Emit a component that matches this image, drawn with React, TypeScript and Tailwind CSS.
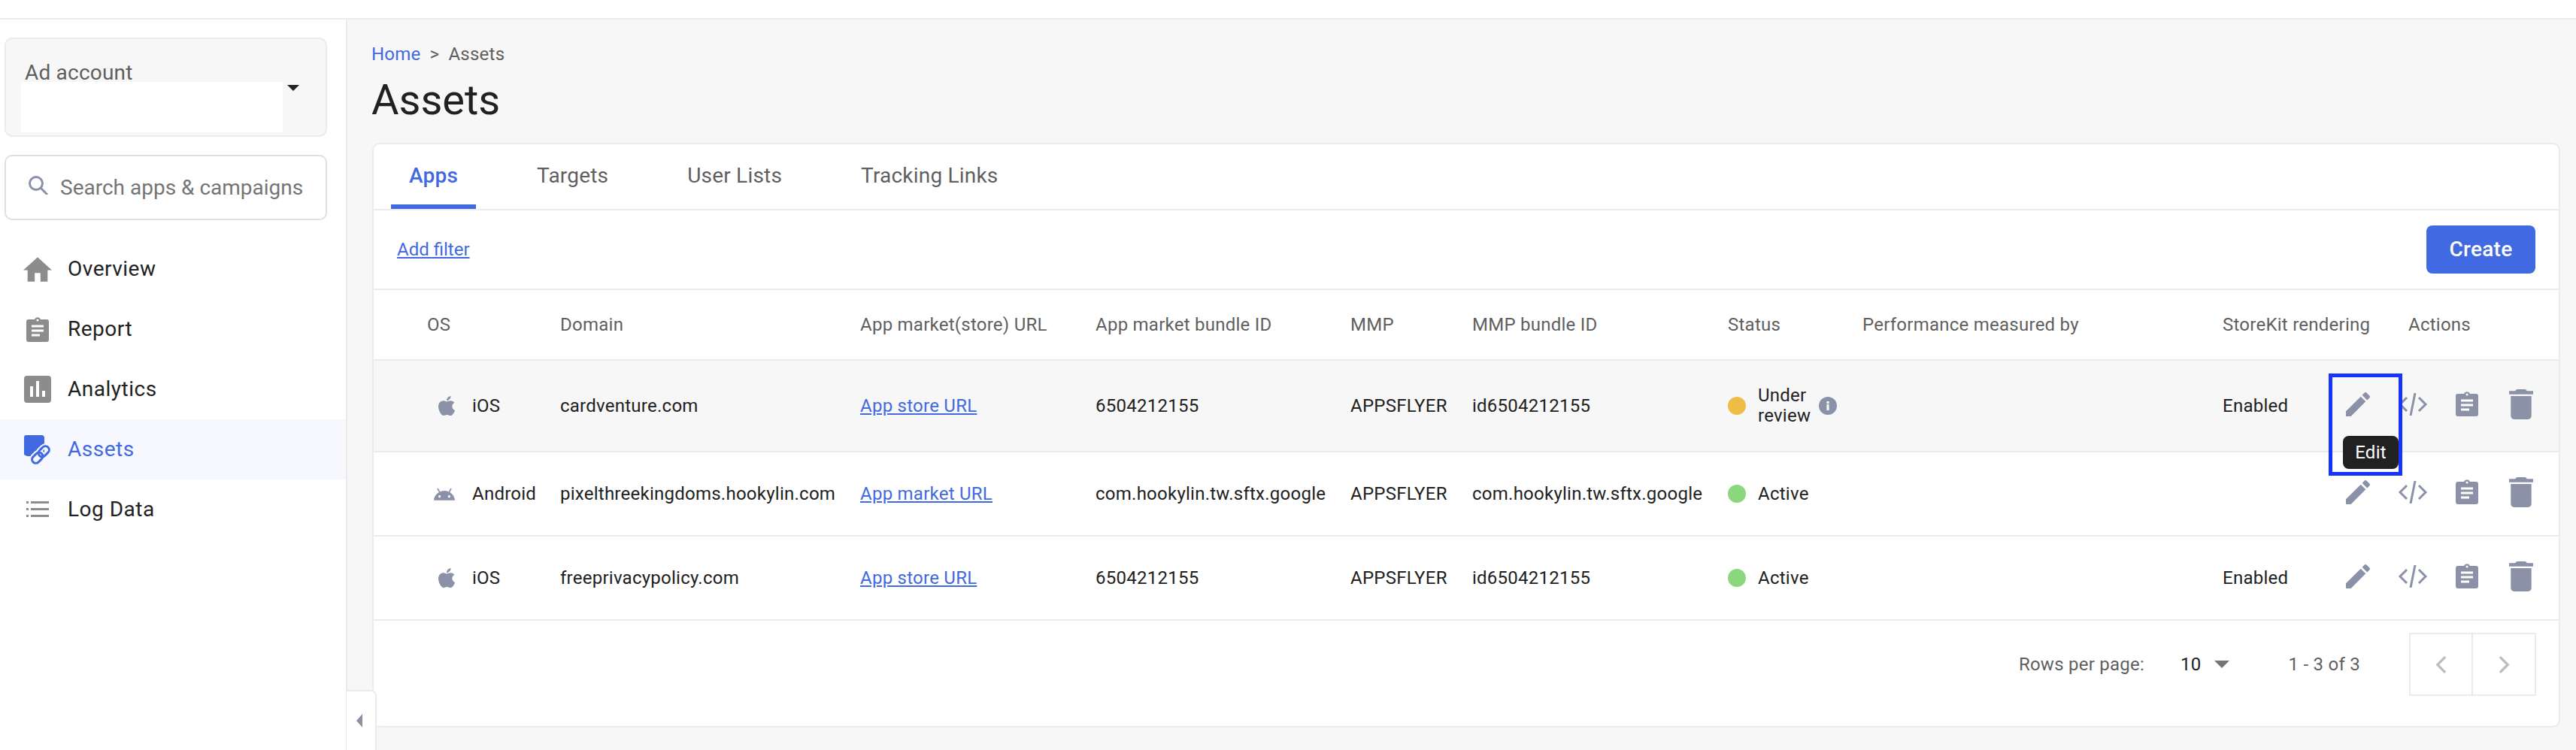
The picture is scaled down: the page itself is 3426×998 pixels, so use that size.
import React from "react";
import { FaApple } from "react-icons/fa";

const Edit = () => (
  <svg viewBox="3 3 18 18" className="w-[32px] h-[32px] fill-[#8b92a8] shrink-0">
    <path d="M3 17.25V21h3.75L17.81 9.94l-3.75-3.75L3 17.25zM20.71 7.04c.39-.39.39-1.02 0-1.41l-2.34-2.34c-.39-.39-1.02-.39-1.41 0l-1.83 1.83 3.75 3.75 1.83-1.83z" />
  </svg>
);
const Code = () => (
  <svg viewBox="0 0 40 30" fill="none" className="w-[40px] h-[30px] stroke-[#8b92a8] shrink-0" strokeWidth="3">
    <path d="M12 6 3 15l9 9M28 6l9 9-9 9M23 0l-6 30" />
  </svg>
);
const Clipboard = ({ fill = "#8b92a8", bg = "white", className = "" }: { fill?: string; bg?: string; className?: string }) => (
  <svg viewBox="0 0 30 33" className={"w-[30px] h-[33px] shrink-0 " + className}>
    <path fill={fill} d="M3 3h8.2a4 4 0 0 1 7.6 0H27a3 3 0 0 1 3 3v24a3 3 0 0 1-3 3H3a3 3 0 0 1-3-3V6a3 3 0 0 1 3-3z" />
    <circle cx="15" cy="4" r="1.5" fill={bg} />
    <rect x="7" y="10.5" width="16" height="3" fill={bg} />
    <rect x="7" y="16.5" width="16" height="3" fill={bg} />
    <rect x="7" y="22.5" width="11" height="3" fill={bg} />
  </svg>
);
const Trash = () => (
  <svg viewBox="5 3 14 18" preserveAspectRatio="none" className="w-[32px] h-[40px] fill-[#8b92a8] shrink-0">
    <path d="M6 19c0 1.1.9 2 2 2h8c1.1 0 2-.9 2-2V7H6v12zM19 4h-3.5l-1-1h-5l-1 1H5v2h14V4z" />
  </svg>
);
const Android = () => (
  <svg viewBox="1 5 22 13" className="w-[28px] h-[19px] fill-[#8b92a8]">
    <path d="M17.6 9.48l1.84-3.18c.16-.31.04-.69-.26-.85-.29-.15-.65-.06-.83.22l-1.88 3.24c-2.86-1.21-6.08-1.21-8.94 0L5.65 5.67c-.19-.29-.58-.38-.87-.2-.28.18-.37.54-.22.83L6.4 9.48C3.3 11.25 1.28 14.44 1 18h22c-.28-3.56-2.3-6.75-5.4-8.52zM7 15.25c-.69 0-1.25-.56-1.25-1.25s.56-1.25 1.25-1.25 1.25.56 1.25 1.25-.56 1.25-1.25 1.25zm10 0c-.69 0-1.25-.56-1.25-1.25s.56-1.25 1.25-1.25 1.25.56 1.25 1.25-.56 1.25-1.25 1.25z" />
  </svg>
);
const Home = () => (
  <svg viewBox="2 3 20 17" className="w-[38px] h-[33px] fill-[#8c8c8c]">
    <path d="M10 20v-6h4v6h5v-8h3L12 3 2 12h3v8z" />
  </svg>
);
const Analytics = () => (
  <svg viewBox="0 0 36 36" className="w-[36px] h-[36px]">
    <rect width="36" height="36" rx="4" fill="#8c8c8c" />
    <rect x="8" y="14" width="4" height="14" fill="white" />
    <rect x="16" y="7" width="4" height="21" fill="white" />
    <rect x="24" y="20" width="4" height="8" fill="white" />
  </svg>
);
const AssetsIcon = () => (
  <svg viewBox="0 0 36 40" className="w-[36px] h-[40px]">
    <path fill="#4169e1" d="M0 4a3 3 0 0 1 3-3h20a4 4 0 0 1 4 4v24H4l-4-2z" />
    <g transform="rotate(-45 22 27)" fill="none">
      <rect x="8" y="22" width="16" height="10" rx="5" stroke="#f6f8fd" strokeWidth="7" />
      <rect x="20" y="22" width="16" height="10" rx="5" stroke="#f6f8fd" strokeWidth="7" />
      <rect x="8" y="22" width="16" height="10" rx="5" stroke="#4169e1" strokeWidth="3" />
      <rect x="20" y="22" width="16" height="10" rx="5" stroke="#4169e1" strokeWidth="3" />
    </g>
  </svg>
);
const ListIcon = () => (
  <svg viewBox="0 0 30 22" className="w-[30px] h-[22px] fill-[#8c8c8c]">
    <rect x="0" y="0" width="3" height="3" />
    <rect x="6" y="0" width="24" height="3" />
    <rect x="0" y="9" width="3" height="3" />
    <rect x="6" y="9" width="24" height="3" />
    <rect x="0" y="18" width="3" height="3" />
    <rect x="6" y="18" width="24" height="3" />
  </svg>
);

const headCols = "grid grid-cols-[248px_399px_313px_339px_162px_340px_179px_479px_247px_1fr]";
const rowCols = "grid grid-cols-[248px_399px_313px_339px_162px_340px_179px_479px_156px_1fr]";

const nav = [
  { label: "Overview", icon: <Home /> },
  { label: "Report", icon: <Clipboard fill="#8c8c8c" /> },
  { label: "Analytics", icon: <Analytics /> },
  { label: "Assets", icon: <AssetsIcon />, active: true },
  { label: "Log Data", icon: <ListIcon /> },
];

const rows = [
  { os: "iOS", domain: "cardventure.com", link: "App store URL", bundle: "6504212155", mmp: "id6504212155", status: "review", sk: "Enabled", h: "h-[122px] bg-[#f7f7f7]" },
  { os: "Android", domain: "pixelthreekingdoms.hookylin.com", link: "App market URL", bundle: "com.hookylin.tw.sftx.google", mmp: "com.hookylin.tw.sftx.google", status: "active", sk: "", h: "h-[112px]" },
  { os: "iOS", domain: "freeprivacypolicy.com", link: "App store URL", bundle: "6504212155", mmp: "id6504212155", status: "active", sk: "Enabled", h: "h-[112px]" },
];

export default function App() {
  return (
    <div className="h-[998px] w-[3426px] overflow-hidden bg-white font-[Roboto,sans-serif] flex flex-col text-[#212121]">
      <div className="h-[26px] shrink-0 bg-white border-b-2 border-[#ebebeb]" />
      <div className="flex flex-1 relative min-h-0">
        <aside className="w-[462px] shrink-0 bg-white border-r-2 border-[#ebebeb] pt-[24px]">
          <div className="mx-[6px] w-[429px] h-[132px] rounded-[10px] border-2 border-[#ebebeb] bg-[#f7f7f7] pt-[29px] pl-[20px]">
            <div className="text-[28px] leading-[32px] pl-[5px] text-[#5f5f5f] tracking-[0.2px]">Ad account</div>
            <div className="flex -mt-[4px]">
              <div className="w-[348px] h-[67px] bg-white" />
              <svg viewBox="0 0 16 8" className="w-[16px] h-[8px] ml-[6px] mt-[4px] fill-[#212121]"><path d="M0 0h16L8 8z" /></svg>
            </div>
          </div>
          <div className="mx-[6px] mt-[24px] w-[429px] h-[87px] rounded-[10px] border-2 border-[#e0e0e0] bg-white flex items-center pl-[30px]">
            <svg viewBox="0 0 26 25" fill="none" className="w-[26px] h-[25px] stroke-[#8b92a8] -mt-[6px]" strokeWidth="3">
              <circle cx="10" cy="10" r="8.5" />
              <path d="m16 16 9 9" />
            </svg>
            <span className="ml-[16px] text-[28px] text-[#757575]">Search apps &amp; campaigns</span>
          </div>
          <nav className="mt-[25px]">
            {nav.map((n) => (
              <div key={n.label} className={"h-[80px] flex items-center pl-[30px] gap-[20px] " + (n.active ? "bg-[#f6f8fd]" : "")}>
                <div className="w-[40px] flex justify-center">{n.icon}</div>
                <span className={"text-[28px] tracking-[0.5px] " + (n.active ? "text-[#4169e1]" : "text-[#212121]")}>{n.label}</span>
              </div>
            ))}
          </nav>
        </aside>

        <main className="flex-1 bg-[#f7f7f7] pl-[33px] pr-[21px] pt-[30px]">
          <div className="-ml-[1px] text-[24px] leading-[32px] flex tracking-[0.25px]">
            <span className="text-[#4169e1]">Home</span>
            <span className="mx-[12px] text-[#5f5f5f]">&gt;</span>
            <span className="text-[#5f5f5f]">Assets</span>
          </div>
          <h1 className="-ml-[1px] mt-[13px] text-[56px] leading-[64px] font-normal text-[#212121]">Assets</h1>

          <section className="mt-[25px] bg-white border-2 border-[#ebebeb] rounded-[10px]">
            <div className="h-[88px] border-b-2 border-[#ebebeb] flex pl-[23px] gap-[57px] text-[28px] tracking-[0.2px]">
              <div className="h-full px-[24px] pt-[4px] flex items-center border-b-[6px] border-[#4169e1] text-[#4169e1] font-medium">Apps</div>
              {["Targets", "User Lists", "Tracking Links"].map((t) => (
                <div key={t} className="h-full px-[24px] flex items-center text-[#5f5f5f] pb-[2px]">{t}</div>
              ))}
            </div>

            <div className="h-[106px] border-b-2 border-[#ebebeb] flex items-center justify-between pl-[31px] pr-[31px]">
              <a className="text-[24px] text-[#4169e1] underline">Add filter</a>
              <button className="w-[145px] h-[64px] rounded-[8px] bg-[#4169e1] text-white text-[28px] font-medium tracking-[0.25px]">Create</button>
            </div>

            <div className={headCols + " h-[94px] border-b-2 border-[#ebebeb] items-center text-[24px] tracking-[0.25px] text-[#5f5f5f]"}>
              <div className="pl-[71px]">OS</div>
              <div>Domain</div>
              <div>App market(store) URL</div>
              <div>App market bundle ID</div>
              <div>MMP</div>
              <div>MMP bundle ID</div>
              <div>Status</div>
              <div>Performance measured by</div>
              <div>StoreKit rendering</div>
              <div>Actions</div>
            </div>

            {rows.map((r, i) => (
              <div key={i} className={rowCols + " border-b-2 border-[#ebebeb] items-center text-[24px] tracking-[0.25px] text-[#212121] " + r.h}>
                <div className="flex items-center pl-[83px]">
                  <div className="w-[48px] flex">
                    {r.os === "iOS" ? <FaApple className="text-[#8b92a8] w-[28px] h-[30px]" /> : <div className="-ml-[3px]"><Android /></div>}
                  </div>
                  <span>{r.os}</span>
                </div>
                <div>{r.domain}</div>
                <div><a className="text-[#4169e1] underline">{r.link}</a></div>
                <div>{r.bundle}</div>
                <div>APPSFLYER</div>
                <div>{r.mmp}</div>
                <div className="flex items-center">
                  <span className={"w-[24px] h-[24px] rounded-full shrink-0 " + (r.status === "review" ? "bg-[#eebd45]" : "bg-[#8bd77d]")} />
                  {r.status === "review" ? (
                    <>
                      <span className="ml-[16px] leading-[27px] w-[81px]">Under review</span>
                      <svg viewBox="0 0 24 24" className="w-[24px] h-[24px]">
                        <circle cx="12" cy="12" r="12" fill="#8b92a8" />
                        <rect x="10.5" y="10" width="3" height="8" fill="white" />
                        <rect x="10.5" y="6" width="3" height="3" fill="white" />
                      </svg>
                    </>
                  ) : (
                    <span className="ml-[16px]">Active</span>
                  )}
                </div>
                <div />
                <div>{r.sk}</div>
                <div className="relative h-full flex items-center pl-[8px] pb-[5px]">
                  <Edit />
                  <div className="ml-[37px]"><Code /></div>
                  <div className="ml-[37px]"><Clipboard /></div>
                  <div className="ml-[41px]"><Trash /></div>
                  {i === 0 && (
                    <>
                      <div className="absolute left-[4px] top-[100px] w-[74px] h-[44px] rounded-[8px] bg-[#212121] text-white text-[24px] flex items-center justify-center z-10">Edit</div>
                      <div className="absolute -left-[15px] top-[17px] w-[98px] h-[136px] border-[5px] border-[#1733ff] z-20" />
                    </>
                  )}
                </div>
              </div>
            ))}

            <div className="h-[140px] pt-[16px] pr-[30px] flex justify-end items-start text-[24px] tracking-[0.25px]">
              <div className="h-[84px] flex items-center">
                <span className="text-[#5f5f5f]">Rows per page:</span>
                <span className="ml-[48px] text-[#212121]">10</span>
                <svg viewBox="0 0 20 10" className="w-[20px] h-[10px] ml-[17px] fill-[#757575]"><path d="M0 0h20L10 10z" /></svg>
                <span className="ml-[79px] text-[#5f5f5f]">1 - 3 of 3</span>
              </div>
              <div className="ml-[65px] flex">
                <div className="w-[85px] h-[84px] border-2 border-[#ebebeb] flex items-center justify-center">
                  <svg viewBox="0 0 16 24" fill="none" className="w-[15px] h-[23px] stroke-[#bdbdbd]" strokeWidth="3.5"><path d="M14 1 3 12l11 11" /></svg>
                </div>
                <div className="w-[84px] h-[84px] border-2 border-l-0 border-[#ebebeb] flex items-center justify-center">
                  <svg viewBox="0 0 16 24" fill="none" className="w-[15px] h-[23px] stroke-[#bdbdbd]" strokeWidth="3.5"><path d="m2 1 11 11L2 23" /></svg>
                </div>
              </div>
            </div>
          </section>
        </main>

        <div className="absolute left-[461px] bottom-0 w-[40px] h-[80px] bg-white border-2 border-l-0 border-b-0 border-[#ebebeb] rounded-tr-[8px] flex items-center justify-center">
          <svg viewBox="0 0 8 18" className="w-[8px] h-[18px] fill-[#8b92a8] -ml-[4px]"><path d="M8 0v18L0 9z" /></svg>
        </div>
      </div>
    </div>
  );
}
